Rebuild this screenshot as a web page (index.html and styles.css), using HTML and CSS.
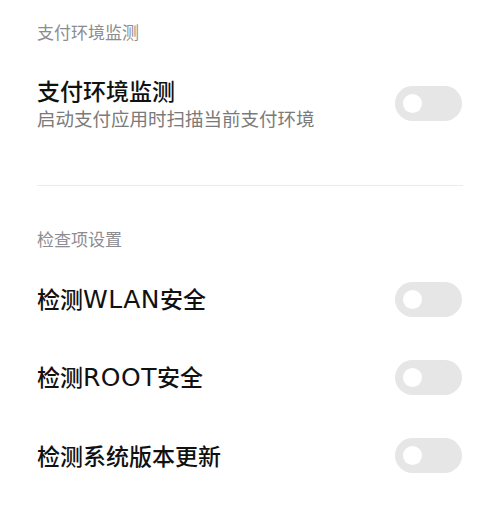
FILE: index.html
```html
<!DOCTYPE html>
<html lang="zh-CN">
<head>
<meta charset="utf-8">
<link rel="stylesheet" href="styles.css">
</head>
<body>
<div class="page">
  <section class="group">
    <div class="group-title">支付环境监测</div>
    <div class="row row-main">
      <div class="row-text">
        <div class="row-title">支付环境监测</div>
        <div class="row-sub">启动支付应用时扫描当前支付环境</div>
      </div>
      <div class="switch"><span class="knob"></span></div>
    </div>
  </section>
  <div class="divider"></div>
  <section class="group group-checks">
    <div class="group-title">检查项设置</div>
    <div class="row row-item">
      <div class="row-title">检测<span class="latin">WLAN</span>安全</div>
      <div class="switch"><span class="knob"></span></div>
    </div>
    <div class="row row-item">
      <div class="row-title">检测<span class="latin">ROOT</span>安全</div>
      <div class="switch"><span class="knob"></span></div>
    </div>
    <div class="row row-item">
      <div class="row-title">检测系统版本更新</div>
      <div class="switch"><span class="knob"></span></div>
    </div>
  </section>
</div>
</body>
</html>
```

FILE: styles.css
```css
html, body {
  margin: 0;
  padding: 0;
  background: #ffffff;
}
body {
  font-family: "Noto Sans CJK SC", "Noto Sans", "Liberation Sans", sans-serif;
  color: #000000;
}
.page {
  padding: 20px 37px 0 37px;
}
.group-title {
  font-size: 17px;
  line-height: 24px;
  color: #8c8c91;
}
.row {
  display: flex;
  align-items: center;
  justify-content: space-between;
}
.row-main {
  margin-top: 31px;
}
.row-title {
  font-size: 23px;
  line-height: 30px;
  font-weight: 500;
  color: #111111;
}
.latin {
  font-family: "DejaVu Sans", "Noto Sans", sans-serif;
  font-weight: 400;
  font-size: 25px;
  letter-spacing: 0.5px;
}
.row-sub {
  font-size: 18.5px;
  line-height: 27px;
  color: #7a7a7a;
}
.divider {
  height: 1px;
  background: #ececec;
  margin-top: 53px;
}
.group-checks {
  margin-top: 41px;
}
.group-checks .group-title {
  margin-bottom: 9px;
}
.row-item {
  height: 78px;
}
.switch {
  width: 67px;
  height: 35px;
  border-radius: 18px;
  background: #e6e6e6;
  display: flex;
  align-items: center;
  padding-left: 8px;
  box-sizing: border-box;
  margin-right: 1px;
}
.knob {
  width: 19px;
  height: 19px;
  border-radius: 50%;
  background: #ffffff;
}
```
